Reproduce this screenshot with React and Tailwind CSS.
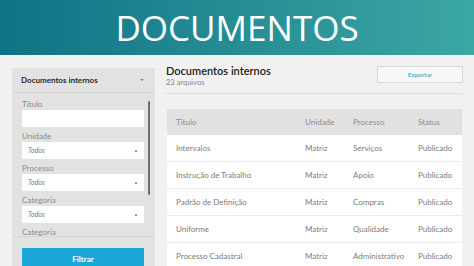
import { useState } from 'react';

const rows = [
  { titulo: 'Intervalos', unidade: 'Matriz', processo: 'Serviços', status: 'Publicado' },
  { titulo: 'Instrução de Trabalho', unidade: 'Matriz', processo: 'Apoio', status: 'Publicado' },
  { titulo: 'Padrão de Definição', unidade: 'Matriz', processo: 'Compras', status: 'Publicado' },
  { titulo: 'Uniforme', unidade: 'Matriz', processo: 'Qualidade', status: 'Publicado' },
  { titulo: 'Processo Cadastral', unidade: 'Matriz', processo: 'Administrativo', status: 'Publicado' },
];

function SelectBox({ value }) {
  return (
    <div className="h-[17px] bg-white flex items-center justify-between pl-[6px] pr-[7px]">
      <span className="text-[7px] italic text-[#777]">{value}</span>
      <span className="w-[2px] h-[2px] bg-[#777] rounded-full" />
    </div>
  );
}

function Field({ label, children }) {
  return (
    <div className="flex flex-col gap-[1px]">
      <div className="h-[10px] leading-[10px] text-[8px] text-[#8a8a8a]">{label}</div>
      {children}
    </div>
  );
}

export default function App() {
  const [titulo, setTitulo] = useState('');

  return (
    <div className="w-[474px] h-[266px] overflow-hidden bg-[#f1f1f1] font-['Lato',sans-serif]">
      <header className="h-[55px] bg-gradient-to-r from-[#0d7386] to-[#3ba7a3] flex items-center justify-center">
        <h1 className="text-white text-[35px] font-medium font-['Open_Sans',sans-serif] leading-none">DOCUMENTOS</h1>
      </header>

      <div className="flex pl-[12px] pt-[13px] gap-[11px]">
        <aside className="w-[143px] h-[210px] bg-[#e2e2e2] flex flex-col">
          <div className="h-[25px] flex items-center justify-between pl-[9px] pr-[11px] border-b border-[#d6d6d6]">
            <span className="text-[8px] font-bold text-[#2a2a2a]">Documentos internos</span>
            <span className="w-0 h-0 border-l-[2px] border-r-[2px] border-t-[2px] border-l-transparent border-r-transparent border-t-[#2aa7cf]" />
          </div>
          <div className="relative h-[144px] pl-[10px] pr-[11px] pt-[6px] flex flex-col gap-[4px] border-b border-[#d6d6d6]">
            <Field label="Titulo">
              <input
                value={titulo}
                onChange={(e) => setTitulo(e.target.value)}
                className="h-[17px] w-full bg-white outline-none text-[7px] px-[6px]"
              />
            </Field>
            <Field label="Unidade">
              <SelectBox value="Todos" />
            </Field>
            <Field label="Processo">
              <SelectBox value="Todos" />
            </Field>
            <Field label="Categoria">
              <SelectBox value="Todos" />
            </Field>
            <div className="h-[10px] leading-[10px] text-[8px] text-[#8a8a8a]">Categoria</div>
            <div className="absolute right-[5px] top-[8px] w-[2px] h-[94px] bg-[#6e6e6e] rounded-full" />
          </div>
          <div className="pt-[7px] pl-[10px] pr-[11px]">
            <button className="w-full h-[22px] bg-[#1ca7d9] text-white text-[8px] font-bold">Filtrar</button>
          </div>
        </aside>

        <main className="w-[296px]">
          <div className="flex items-start justify-between h-[26px] border-b border-[#dcdcdc]">
            <div>
              <div className="text-[11px] leading-[12px] font-semibold text-[#222] -mt-[3px]">Documentos internos</div>
              <div className="text-[7.5px] leading-[10px] text-[#888] mt-[1px]">23 arquivos</div>
            </div>
            <button className="w-[86px] h-[17px] -mt-[2px] mr-[-1px] border border-[#d8d8d8] bg-[#f7f7f7] text-[6.5px] text-[#2a9cc8]">
              Exportar
            </button>
          </div>

          <div className="mt-[15px] ml-[1px] w-[295px] bg-white">
            <div className="grid grid-cols-[129px_48px_65px_53px] h-[26px] items-center bg-[#e1e1e1] text-[8px] text-[#8c8c8c]">
              <div className="pl-[9px]">Titulo</div>
              <div className="pl-[9px]">Unidade</div>
              <div className="pl-[9px]">Processo</div>
              <div className="pl-[9px]">Status</div>
            </div>
            {rows.map((row) => (
              <div
                key={row.titulo}
                className="grid grid-cols-[129px_48px_65px_53px] h-[27px] items-center border-b border-[#ececec] text-[8px] text-[#7c7c7c]"
              >
                <div className="pl-[9px]">{row.titulo}</div>
                <div className="pl-[9px]">{row.unidade}</div>
                <div className="pl-[9px]">{row.processo}</div>
                <div className="pl-[9px]">{row.status}</div>
              </div>
            ))}
          </div>
        </main>
      </div>
    </div>
  );
}
